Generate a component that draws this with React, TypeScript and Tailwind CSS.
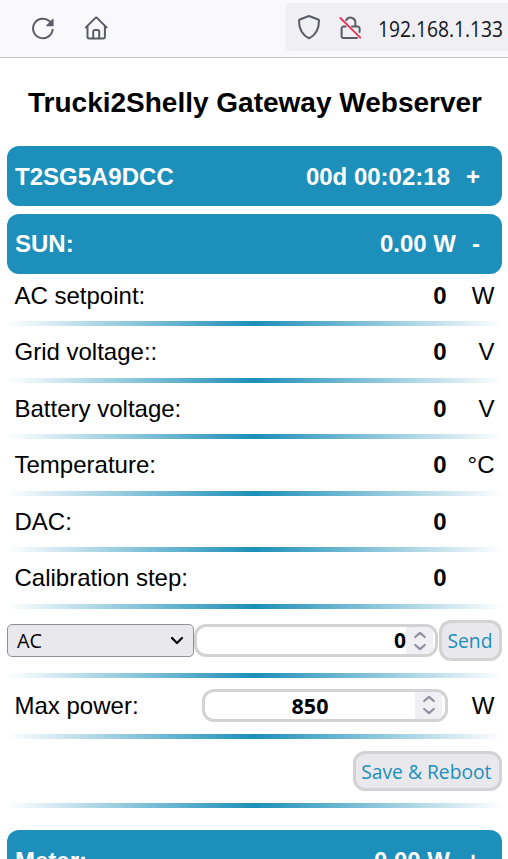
import type { ReactNode } from "react";

const ARIAL = "font-['Liberation_Sans',Arial,sans-serif]";
const SEGOE = "font-['Open_Sans','Noto_Sans',sans-serif]";

function Toolbar() {
  return (
    <header className="flex h-[58px] shrink-0 border-b border-[#c4c4cd] bg-[#f9f9fb]">
      <div className="flex w-[285px] shrink-0 items-start gap-[28px] pl-[30px] pt-[15px] text-[#5b5b66]">
        <svg width="25" height="26" viewBox="0 0 25 26" fill="none" stroke="currentColor" strokeWidth="2" strokeLinecap="round">
          <path d="M19.6 6.3A9.8 9.8 0 1 0 22.6 14.8" />
          <path d="M23 4.4v6.2h-6.2z" fill="currentColor" strokeWidth="1.2" strokeLinejoin="round" />
        </svg>
        <svg width="26" height="26" viewBox="0 0 26 26" fill="none" stroke="currentColor" strokeWidth="2" strokeLinecap="round" strokeLinejoin="round">
          <path d="M2.9 12.4 12.2 3.1Q13.2 2.2 14.2 3.1L23.5 12.4M4.5 11v10.8a1.6 1.6 0 0 0 1.6 1.6h14.2a1.6 1.6 0 0 0 1.6-1.6V11" />
          <path d="M10.2 23.2v-6.4a1.7 1.7 0 0 1 1.7-1.7h2.6a1.7 1.7 0 0 1 1.7 1.7v6.4" />
        </svg>
      </div>
      <div className="mt-[3px] flex h-[48px] flex-1 items-center overflow-hidden rounded-l-[5px] bg-[#f0f0f4] pl-[12px]">
        <svg className="shrink-0" width="24" height="26" viewBox="0 0 24 26" fill="none" stroke="#5b5b66" strokeWidth="2" strokeLinejoin="round">
          <path d="M12 2 21.2 5.5Q22 5.8 22 6.8C22 15 18.3 21.3 12 24.3 5.7 21.3 2 15 2 6.8Q2 5.8 2.8 5.5Z" />
        </svg>
        <svg className="ml-[18px] shrink-0" width="24" height="26" viewBox="0 0 24 26" fill="none" strokeLinecap="round">
          <path d="M7.2 6.2A4.9 4.9 0 0 1 16.4 8V12.6H18.8A1.8 1.8 0 0 1 20.6 14.4V18M6.6 12.6H4.4A1.8 1.8 0 0 0 2.6 14.4V22.2A1.8 1.8 0 0 0 4.4 24H18M13 12.6H16.4" stroke="#5b5b66" strokeWidth="2" />
          <path d="M1.4 4 21.2 23.6" stroke="#e73a60" strokeWidth="2" />
        </svg>
        <span className={`${SEGOE} mt-[3px] ml-[15px] w-[125px] origin-left scale-x-[0.915] text-[21px] leading-[28px] whitespace-nowrap text-[#15141a]`}>192.168.1.133</span>
      </div>
    </header>
  );
}

function Divider() {
  return <div className="h-[5px] shrink-0 bg-linear-to-r/srgb from-white via-[#1c8fb9] to-white" />;
}

function Panel({ title, value, sign, className = "" }: { title: string; value: string; sign: string; className?: string }) {
  return (
    <button className={`flex h-[60px] w-full shrink-0 items-center rounded-[12px] bg-[#1c8fbb] pr-[22px] pl-[8px] text-[24px] font-bold text-white ${className}`}>
      <span>{title}</span>
      <span className="ml-auto">{value}</span>
      <span className="ml-[16px]">{sign}</span>
    </button>
  );
}

function Reading({ label, unit, height }: { label: string; unit: string; height: string }) {
  return (
    <>
      <div className={`flex shrink-0 items-center px-[7.5px] text-[24px] ${height}`}>
        <span>{label}</span>
        <span className="ml-auto font-bold">0</span>
        <span className="w-[48px] text-right">{unit}</span>
      </div>
      <Divider />
    </>
  );
}

function Spinner() {
  return (
    <span className="flex h-full w-[27px] items-center justify-center bg-[#f0f0f4]">
      <svg width="14" height="20" viewBox="0 0 14 20" fill="none" stroke="#8f8f9d" strokeWidth="2.2" strokeLinecap="round" strokeLinejoin="round">
        <path d="M2.2 6 7 1.8l4.8 4.2M2.2 14l4.8 4.2 4.8-4.2" />
      </svg>
    </span>
  );
}

function ActionButton({ children, className }: { children: ReactNode; className: string }) {
  return (
    <button className={`${SEGOE} flex items-center justify-center rounded-[12px] border-[3px] border-[#d3d3d3] bg-[#e9e9ed] text-[20.5px] whitespace-nowrap text-[#1c8fbb] ${className}`}>
      <span className="scale-x-[0.94]">{children}</span>
    </button>
  );
}

export default function App() {
  return (
    <div className={`${ARIAL} flex h-[859px] w-[508px] flex-col overflow-hidden bg-white text-black`}>
      <Toolbar />
      <main className="flex flex-col pr-[6px] pl-[7px]">
        <h1 className="flex h-[88px] shrink-0 items-center justify-center pt-[1px] pl-[1px] text-[28px] font-bold whitespace-nowrap">Trucki2Shelly Gateway Webserver</h1>
        <Panel title="T2SG5A9DCC" value="00d 00:02:18" sign="+" className="pt-[2px]" />
        <Panel title="SUN:" value="0.00 W" sign="-" className="mt-[8px]" />
        <Reading label="AC setpoint:" unit="W" height="h-[47px] pb-[3px]" />
        <Reading label="Grid voltage::" unit="V" height="h-[52px]" />
        <Reading label="Battery voltage:" unit="V" height="h-[51px]" />
        <Reading label="Temperature:" unit="°C" height="h-[52px]" />
        <Reading label="DAC:" unit="" height="h-[51px]" />
        <Reading label="Calibration step:" unit="" height="h-[52px]" />
        <div className="flex h-[64px] shrink-0 items-center pb-[1px]">
          <button className={`${SEGOE} flex h-[33px] w-[187px] items-center justify-between rounded-[5px] border border-[#8f8f9d] bg-[#e9e9ed] pr-[9px] pl-[9px] text-[20.5px]`}>
            <span className="origin-left scale-x-[0.97]">AC</span>
            <svg width="14" height="10" viewBox="0 0 14 10" fill="none" stroke="black" strokeWidth="2.2" strokeLinecap="round" strokeLinejoin="round">
              <path d="m2 2 5 5 5-5" />
            </svg>
          </button>
          <div className={`${SEGOE} flex h-[33px] w-[244px] items-center overflow-hidden rounded-[12px] border-[3px] border-[#d3d3d3] pr-[2px] text-[21px] font-bold`}>
            <span className="flex-1 text-right">0</span>
            <Spinner />
          </div>
          <ActionButton className="ml-[1px] h-[41px] w-[63px] pr-[2px]">Send</ActionButton>
        </div>
        <Divider />
        <div className="flex h-[56px] shrink-0 items-center pr-[7.5px] pl-[7.5px] text-[24px]">
          <span>Max power:</span>
          <div className={`${SEGOE} mb-[2px] ml-auto flex h-[33px] w-[246px] items-center overflow-hidden rounded-[12px] border-[3px] border-[#d3d3d3] pr-[3px] text-[21.5px] font-bold`}>
            <span className="flex-1 pt-[2px] text-center">850</span>
            <Spinner />
          </div>
          <span className="w-[46.5px] text-right">W</span>
        </div>
        <Divider />
        <div className="flex h-[64px] shrink-0 items-center justify-end">
          <ActionButton className="h-[40px] w-[149px] pt-[1px] pr-[2px]">Save &amp; Reboot</ActionButton>
        </div>
        <Divider />
        <Panel title="Meter:" value="0.00 W" sign="+" className="mt-[22px] pt-[2px]" />
      </main>
    </div>
  );
}
